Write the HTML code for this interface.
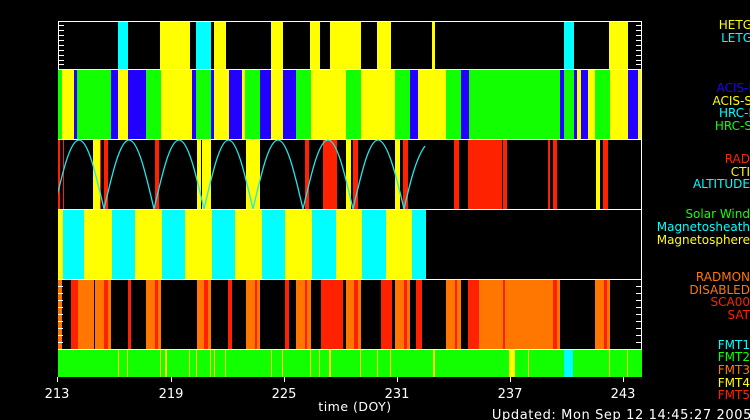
<!DOCTYPE html>
<html><head><meta charset="utf-8"><style>
html,body{margin:0;padding:0;background:#000;width:750px;height:420px;overflow:hidden}
svg{position:absolute;left:0;top:0}
text{font-family:"DejaVu Sans","Liberation Sans",sans-serif}
</style></head><body>
<svg width="750" height="420" viewBox="0 0 750 420">
<defs><clipPath id="c3"><rect x="58" y="139" width="584" height="70"/></clipPath></defs>
<g shape-rendering="crispEdges">
<g fill="#0ff"><rect x="118" y="21" width="10" height="48"/><rect x="196" y="21" width="15" height="48"/><rect x="564" y="21" width="10" height="48"/></g>
<g fill="#ff0"><rect x="160" y="21" width="30" height="48"/><rect x="214" y="21" width="12" height="48"/><rect x="271" y="21" width="12" height="48"/><rect x="310" y="21" width="10" height="48"/><rect x="330" y="21" width="31" height="48"/><rect x="377" y="21" width="14" height="48"/><rect x="432" y="21" width="3" height="48"/><rect x="609" y="21" width="19" height="48"/></g>
<rect x="58" y="69" width="584" height="70" fill="#1f0"/>
<g fill="#ff0"><rect x="62" y="69" width="12" height="70"/><rect x="118" y="69" width="10" height="70"/><rect x="161" y="69" width="31" height="70"/><rect x="214" y="69" width="15" height="70"/><rect x="242" y="69" width="3" height="70"/><rect x="271" y="69" width="12" height="70"/><rect x="311" y="69" width="35" height="70"/><rect x="361" y="69" width="34" height="70"/><rect x="418" y="69" width="28" height="70"/><rect x="577" y="69" width="4" height="70"/><rect x="588" y="69" width="7" height="70"/><rect x="610" y="69" width="18" height="70"/><rect x="638" y="69" width="4" height="70"/></g>
<g fill="#2200ff"><rect x="74" y="69" width="3" height="70"/><rect x="111" y="69" width="7" height="70"/><rect x="128" y="69" width="18" height="70"/><rect x="192" y="69" width="4" height="70"/><rect x="211" y="69" width="3" height="70"/><rect x="229" y="69" width="13" height="70"/><rect x="260" y="69" width="11" height="70"/><rect x="283" y="69" width="13" height="70"/><rect x="410" y="69" width="8" height="70"/><rect x="461" y="69" width="8" height="70"/><rect x="560" y="69" width="4" height="70"/><rect x="574" y="69" width="3" height="70"/><rect x="581" y="69" width="7" height="70"/><rect x="628" y="69" width="10" height="70"/></g>
<g fill="#ff2200"><rect x="58" y="139" width="2" height="70"/><rect x="63" y="139" width="1" height="70"/><rect x="100" y="139" width="1" height="70"/><rect x="104" y="139" width="4" height="70"/><rect x="155" y="139" width="4" height="70"/><rect x="305" y="139" width="4" height="70"/><rect x="323" y="139" width="14" height="70"/><rect x="353" y="139" width="5" height="70"/><rect x="403" y="139" width="5" height="70"/><rect x="454" y="139" width="5" height="70"/><rect x="468" y="139" width="39" height="70"/><rect x="548" y="139" width="2" height="70"/><rect x="553" y="139" width="4" height="70"/><rect x="603" y="139" width="5" height="70"/></g>
<g fill="#ff0"><rect x="93" y="139" width="7" height="70"/><rect x="197" y="139" width="14" height="70"/><rect x="246" y="139" width="14" height="70"/><rect x="346" y="139" width="5" height="70"/><rect x="395" y="139" width="5" height="70"/><rect x="596" y="139" width="4" height="70"/></g>
<g fill="#000"><rect x="201" y="139" width="1" height="70"/><rect x="502" y="139" width="1" height="70"/></g>
<g fill="#ff0"><rect x="58" y="209" width="368" height="70"/></g>
<g fill="#0ff"><rect x="63" y="209" width="21" height="70"/><rect x="112" y="209" width="23" height="70"/><rect x="162" y="209" width="23" height="70"/><rect x="212" y="209" width="23" height="70"/><rect x="262" y="209" width="23" height="70"/><rect x="312" y="209" width="24" height="70"/><rect x="362" y="209" width="24" height="70"/><rect x="412" y="209" width="14" height="70"/></g>
<g fill="#ff7700"><rect x="58" y="279" width="4" height="70"/><rect x="78" y="279" width="16" height="70"/><rect x="95" y="279" width="16" height="70"/><rect x="146" y="279" width="15" height="70"/><rect x="197" y="279" width="14" height="70"/><rect x="246" y="279" width="14" height="70"/><rect x="296" y="279" width="15" height="70"/><rect x="346" y="279" width="15" height="70"/><rect x="395" y="279" width="15" height="70"/><rect x="446" y="279" width="15" height="70"/><rect x="479" y="279" width="81" height="70"/><rect x="595" y="279" width="15" height="70"/></g>
<g fill="#ff2200"><rect x="71" y="279" width="7" height="70"/><rect x="104" y="279" width="4" height="70"/><rect x="128" y="279" width="3" height="70"/><rect x="155" y="279" width="3" height="70"/><rect x="204" y="279" width="4" height="70"/><rect x="228" y="279" width="4" height="70"/><rect x="255" y="279" width="2" height="70"/><rect x="285" y="279" width="4" height="70"/><rect x="305" y="279" width="2" height="70"/><rect x="321" y="279" width="22" height="70"/><rect x="354" y="279" width="4" height="70"/><rect x="381" y="279" width="11" height="70"/><rect x="404" y="279" width="3" height="70"/><rect x="416" y="279" width="6" height="70"/><rect x="455" y="279" width="2" height="70"/><rect x="468" y="279" width="11" height="70"/><rect x="503" y="279" width="2" height="70"/><rect x="553" y="279" width="4" height="70"/><rect x="604" y="279" width="3" height="70"/></g>
<rect x="58" y="349" width="584" height="28" fill="#1f0"/>
<g fill="#ff0"><rect x="118" y="349" width="1" height="28"/><rect x="127" y="349" width="1" height="28"/><rect x="160" y="349" width="1" height="28"/><rect x="165" y="349" width="2" height="28"/><rect x="189" y="349" width="1" height="28"/><rect x="196" y="349" width="1" height="28"/><rect x="210" y="349" width="1" height="28"/><rect x="214" y="349" width="1" height="28"/><rect x="225" y="349" width="1" height="28"/><rect x="271" y="349" width="1" height="28"/><rect x="282" y="349" width="1" height="28"/><rect x="310" y="349" width="1" height="28"/><rect x="319" y="349" width="1" height="28"/><rect x="329" y="349" width="2" height="28"/><rect x="360" y="349" width="1" height="28"/><rect x="377" y="349" width="1" height="28"/><rect x="390" y="349" width="1" height="28"/><rect x="433" y="349" width="2" height="28"/><rect x="509" y="349" width="6" height="28"/><rect x="528" y="349" width="1" height="28"/><rect x="609" y="349" width="1" height="28"/><rect x="627" y="349" width="1" height="28"/></g>
<rect x="564" y="349" width="9" height="28" fill="#0ff"/>
<g fill="#fff"><rect x="58" y="21" width="584" height="1"/><rect x="58" y="69" width="584" height="1"/><rect x="58" y="139" width="584" height="1"/><rect x="58" y="209" width="584" height="1"/><rect x="58" y="279" width="584" height="1"/><rect x="58" y="349" width="584" height="1"/><rect x="58" y="21" width="1" height="48"/><rect x="641" y="21" width="1" height="258"/><rect x="641" y="279" width="1" height="70"/>
<rect x="57" y="377" width="1" height="5"/><rect x="171" y="377" width="1" height="5"/><rect x="284" y="377" width="1" height="5"/><rect x="397" y="377" width="1" height="5"/><rect x="510" y="377" width="1" height="5"/><rect x="623" y="377" width="1" height="5"/></g>
<g stroke="#fff" stroke-width="1"><path d="M58 25.5h6M58 30.5h6M58 35.5h6M58 40.5h6M58 45.5h6M58 50.5h6M58 55.5h6M58 60.5h6M58 64.5h6M636 25.5h6M636 30.5h6M636 35.5h6M636 40.5h6M636 45.5h6M636 50.5h6M636 55.5h6M636 60.5h6M636 64.5h6M58 286.5h5M58 293.5h5M58 300.5h5M58 307.5h5M58 314.5h5M58 321.5h5M58 328.5h5M58 335.5h5M58 342.5h5M636 286.5h6M636 293.5h6M636 300.5h6M636 307.5h6M636 314.5h6M636 321.5h6M636 328.5h6M636 335.5h6M636 342.5h6"/></g>
</g>
<path clip-path="url(#c3)" fill="none" stroke="#22e6ee" stroke-width="1.3" d="M54 209 C62.2 173.7 70 140 79 140 C88 140 95.8 173.7 104 209 C112.2 173.7 120 140 129 140 C138 140 145.8 173.7 154 209 C162.2 173.7 170 140 179 140 C188 140 195.8 173.7 204 209 C212.2 173.7 220 140 228.5 140 C237 140 244.8 173.7 253 209 C261.2 173.7 269 140 278 140 C287 140 294.8 173.7 303 209 C311.2 173.7 319 140 328 140 C337 140 344.8 173.7 353 209 C361.2 173.7 369 140 378 140 C387 140 395.8 173.7 404 209 C410 183 416 158 425 146"/>
<g fill="#fff" font-size="13"><text x="57" y="398" text-anchor="middle">213</text><text x="171" y="398" text-anchor="middle">219</text><text x="284" y="398" text-anchor="middle">225</text><text x="397" y="398" text-anchor="middle">231</text><text x="510" y="398" text-anchor="middle">237</text><text x="623" y="398" text-anchor="middle">243</text>
<text x="355" y="411" text-anchor="middle" font-size="12.5" letter-spacing="0.5">time (DOY)</text>
<text x="752" y="419" text-anchor="end" font-size="13" letter-spacing="0.6">Updated: Mon Sep 12 14:45:27 2005</text></g>
<g font-size="12" text-anchor="end">
<text x="752" y="29" fill="#ff0">HETG</text><text x="752" y="42" fill="#0ff">LETG</text>
<text x="752" y="92" fill="#2200ff">ACIS-I</text><text x="752" y="105" fill="#ff0">ACIS-S</text><text x="752" y="117" fill="#0ff">HRC-I</text><text x="752" y="130" fill="#1f0">HRC-S</text>
<text x="750" y="163" fill="#ff2200">RAD</text><text x="750" y="176" fill="#ff0">CTI</text><text x="750" y="188" fill="#0ff">ALTITUDE</text>
<text x="750" y="218" fill="#1f0">Solar Wind</text><text x="750" y="231" fill="#0ff">Magnetosheath</text><text x="750" y="244" fill="#ff0">Magnetosphere</text>
<text x="750" y="281" fill="#ff7700">RADMON</text><text x="750" y="294" fill="#ff7700">DISABLED</text><text x="750" y="306" fill="#ff2200">SCA00</text><text x="750" y="319" fill="#ff2200">SAT</text>
<text x="750" y="349" fill="#0ff">FMT1</text><text x="750" y="361" fill="#1f0">FMT2</text><text x="750" y="374" fill="#ff7700">FMT3</text><text x="750" y="387" fill="#ff0">FMT4</text><text x="750" y="399" fill="#ff2200">FMT5</text>
</g>
</svg>
</body></html>
